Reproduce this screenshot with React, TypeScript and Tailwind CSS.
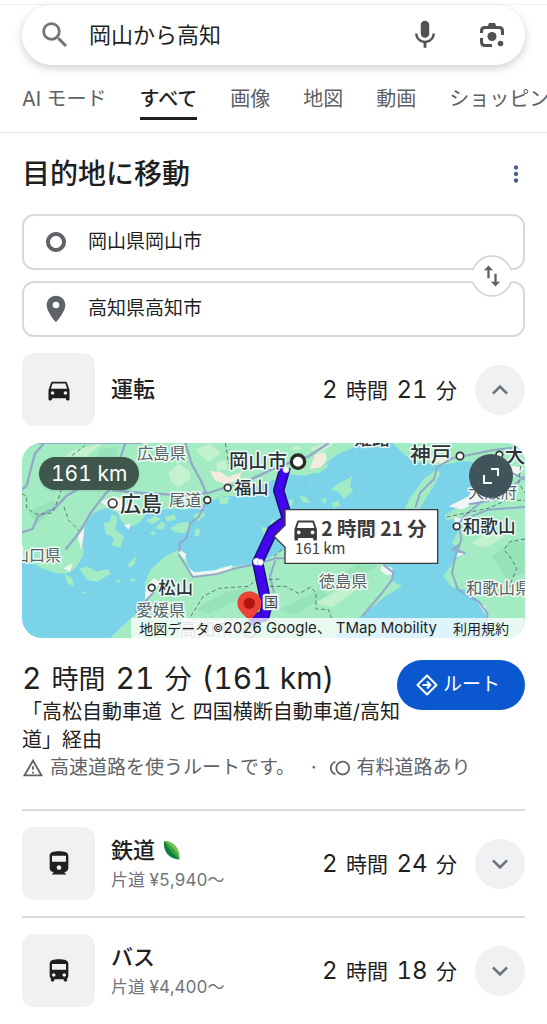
import { useState } from 'react'
import {
  MdDirectionsBus,
  MdDirectionsCar,
  MdDirectionsRailway,
  MdExpandLess,
  MdExpandMore,
  MdMic,
  MdMoreVert,
  MdOutlineToll,
  MdOutlineWarningAmber,
  MdPlace,
  MdSearch,
  MdSwapVert,
  MdTripOrigin,
} from 'react-icons/md'

const tabs = ['AI モード', 'すべて', '画像', '地図', '動画', 'ショッピング']

const LensIcon = () => (
  <svg viewBox='0 0 26 28' className='h-7 w-[26px]' fill='none' stroke='#4f5155' strokeWidth='3'>
    <path d='M2.500 12V10Q2.500 6.500 6 6.500H20Q23.500 6.500 23.500 10V14' />
    <path d='M2.500 17v4Q2.500 24.500 6 24.500H13' />
    <path d='M8.500 6L10 2h6l1.500 4z' fill='#4f5155' stroke='none' />
    <circle cx='13' cy='15.500' r='4.500' fill='#4f5155' stroke='none' />
    <circle cx='21.500' cy='22.500' r='2.800' fill='#4f5155' stroke='none' />
  </svg>
)

const RouteIcon = () => (
  <svg viewBox='0 0 24 24' className='size-6' fill='none' stroke='currentColor' strokeWidth='2' strokeLinejoin='round'>
    <path d='M12 2.500L21.500 12 12 21.500 2.500 12z' />
    <path d='M7.500 12h8M12 8.500l3.500 3.500-3.500 3.500' />
  </svg>
)

const LeafIcon = () => (
  <svg viewBox='0 0 18 20' className='h-5 w-[18px]'>
    <path d='M1 1C9 0 18 8 16.500 19.500 13 14 7 7 1 1z' fill='#72c14b' />
    <path d='M1 1C0 11 5 19 16.500 19.500 13 13 7 6 1 1z' fill='#0f7f3a' />
    <path d='M1 1C6 9 11 15 16.500 19.500 15 12 8 5 1 1z' fill='#3aa346' />
  </svg>
)

type DurationProps = { minutes: number; large?: boolean }

// kanji units are set a little smaller than the digits
function Duration({ minutes, large }: DurationProps) {
  const unit = large ? 'text-[27px] mx-0.5' : 'text-[21px] mx-0.5'
  return (
    <>
      2 <span className={unit}>時間</span> {minutes} <span className={unit}>分</span>
    </>
  )
}

type Label = { text: string; x: number; y: number; size: number; city?: boolean; faded?: boolean }

const labels: Label[] = [
  { text: '広島県', x: 345, y: 48, size: 49 },
  { text: '広島', x: 294, y: 204, size: 63, city: true },
  { text: '尾道', x: 441, y: 189, size: 49 },
  { text: '福山', x: 636, y: 152, size: 52, city: true },
  { text: '岡山市', x: 621, y: 76, size: 58, city: true },
  { text: '山口県', x: -27, y: 353, size: 48 },
  { text: '松山', x: 409, y: 453, size: 52, city: true },
  { text: '愛媛県', x: 343, y: 518, size: 49 },
  { text: '徳島県', x: 890, y: 431, size: 49 },
  { text: '神戸', x: 1164, y: 57, size: 62, city: true },
  { text: '大阪', x: 1448, y: 59, size: 62, city: true },
  { text: '大阪府', x: 1338, y: 165, size: 49 },
  { text: '和歌山', x: 1322, y: 270, size: 53, city: true },
  { text: '和歌山県', x: 1332, y: 453, size: 49 },
  { text: '姫路', x: 996, y: 5, size: 54, city: true },
  { text: '高知市', x: 472, y: 580, size: 54, faded: true },
]

const stations = [
  [272, 181, 13],
  [556, 171, 10],
  [617, 134, 10],
  [389, 434, 10],
  [1314, 39, 11],
  [1432, 35, 10],
  [1304, 250, 10],
]

const route = 'M790 72L770 142 797 230 752 262 707 358 722 430 734 490 726 520 684 532'

const RouteMap = () => (
  <svg viewBox='0 0 1509 585' preserveAspectRatio='xMidYMid slice' className='block h-[195px] w-full bg-[#7ad3e9]'>
    {/* land */}
    <g fill='#a3ebc3'>
      <path d='M0 0H1060L1010 6 980 20 950 32 912 60 890 86 850 98 815 95 800 92 770 122 755 110 720 126 680 136 640 160 600 158 570 175 530 190 490 200 450 196 400 205 370 215 352 240 322 252 300 238 285 208 250 195 215 210 190 240 183 290 184 335 165 370 140 390 105 392 60 375 0 345z' />
      <path d='M265 585L300 550 345 510 372 470 368 420 385 380 430 340 468 322 492 345 505 388 560 390 600 372 690 365 740 345 790 318 1000 340 1080 362 1115 385 1108 412 1140 430 1090 460 1020 518 970 550 935 585z' />
      <path d='M1110 0L1165 50 1250 68 1320 55 1390 60 1370 130 1350 165 1310 190 1268 218 1298 232 1306 270 1290 300 1330 332 1300 350 1265 398 1290 432 1330 440 1380 480 1392 525 1400 585H1509V0z' />
      <path d='M1148 200L1160 172 1182 140 1208 105 1244 82 1256 90 1222 150 1190 200z' />
      <path d='M925 138L958 118 990 100 984 130 994 142 966 168 950 148z' />
      <path d='M752 225L768 262 738 298 716 252 740 256z' />
      <path d='M246 240L262 236 270 212 286 222 280 262 306 280 296 314 268 306 276 286 250 272z' />
      <path d='M172 378L196 370 222 386 256 378 266 392 226 416 196 412z' />
      <path d='M128 392L150 404 156 430 138 422z' />
      <path d='M316 366l26-28-4 24-16 12zM276 415l20-8-4 12zM322 410l14-6 4 8-12 6zM178 448l14-4-2 10zM384 270l10-6 8 8-12 4z' />
      <path d='M372 232l28-14 16 10-26 16zM400 256l18-20 14 8-10 16zM428 222l30-8 4 16-26 6zM446 254l24-14 26-4 10 16-20 20-30-6zM512 218l26-14 12 12-22 20zM520 258l16-2-6 26-12-4zM592 160l30 2-6 22-24-2z' />
      <path d='M832 158l20 4 12 18-22-2zM802 168l12 2-2 20-10-4zM894 168l20-2-4 18zM928 180l22-6 4 16-20 4zM862 124l6 2-4 6zM876 84l44-24-6 16-28 16zM1268 214l40-8-10 20-26 8z' />
    </g>
    {/* shaded and lighter hills */}
    <g fill='#c4f2cf'>
      <path d='M150 24L240 0 190 44 130 74 84 130 110 60z' />
      <path d='M440 88L470 62 500 80 506 108 470 132 446 116zM520 20l44-18 34 28-40 26z' />
      <path d='M580 60l30-10 8 28-30 6zM862 16l44-16h34l-50 34zM800 20l30-14 6 14z' />
      <path d='M1350 300l40-30 60 10-60 34zM880 480l90-50 40 6-80 56z' />
    </g>
    <g fill='#96e3ba'>
      <path d='M520 500L600 452 680 432 650 470 560 512zM770 500l120-60 30 14-100 60zM950 400l60-40 60 10-70 34z' />
      <path d='M1410 340l60-50 39 10v90l-54 20zM20 210l70-40 20 20-60 50zM230 20l60-10-20 60-40 20z' />
    </g>
    {/* built-up coast */}
    <g fill='#f1f5f4'>
      <path d='M236 176l40-18 30 14 16 26-36 6-30-12zM172 262l14-4-2 26-8 34-8-30zM124 376l28-16-8 26zM306 246l20-4-6 18z' />
      <path d='M470 318l22 14-2 18-18-16zM496 372l22 16 60-6 54-16-8 16-56 18-62-2zM372 430l24-24 16 10-14 30-30 24z' />
      <path d='M1280 190l60-30 34-70 60-30 75 16-30 24-60 20-40 50-60 30zM1296 222l24 6-4 20-18-4zM1080 366l30 8 6 20-24 2-18-14z' />
      <path d='M1306 328l22 4-24 12zM1366 476l24 14-2 20z' />
    </g>
    <g fill='#f3ebdf'>
      <path d='M564 84l30 2 24 16 40-14-4 16-42 22-34-14zM880 34l30-6 4 24-20 22-32 4zM1180 40l60 10 40-6-20 18z' />
    </g>
    {/* roads */}
    <g fill='none' stroke='#92a9c8' strokeWidth='7' strokeLinejoin='round'>
      <path d='M0 268L32 258 48 220 98 196 132 160 180 130 220 104 270 90M66 0L38 34 26 80 14 128 0 140M130 320L172 268 206 210 250 152 276 130 290 60 310 0' />
      <path d='M270 142L360 150 470 156 560 150 612 132 680 112 770 70 860 40 920 0M490 0L508 60 540 120 552 150' />
      <path d='M550 180L530 222 505 240 494 284 474 300 472 326M470 334L512 402 580 394 640 376 710 362 760 346 790 346M340 510L384 460 396 446M360 0H0' strokeWidth='6' />
      <path d='M1020 520L1080 450 1110 410 1114 388 1084 366M1180 195L1194 150 1236 108 1246 72 1290 46 1420 20 1509 10M760 352L744 400 756 450' strokeWidth='6' />
      <path d='M1386 170L1326 220 1310 244 1318 290 1300 340 1290 390 1308 440 1370 476 1396 510 1394 585M1316 232L1400 200 1509 192M1340 184L1420 170 1509 100M1470 90L1509 110M1330 330L1292 320 1316 300' strokeWidth='6' />
    </g>
    {/* prefecture borders */}
    <g fill='none' stroke='#5d7a74' strokeWidth='3' strokeDasharray='12 8'>
      <path d='M0 152L14 160 14 196 44 214 90 210 100 190 116 150 122 86 142 44 188 8M126 192L140 232 172 264M610 0L620 62' />
      <path d='M506 520L544 460 590 436 680 430 700 412 780 408M744 430L790 430 832 452 866 432 882 450 882 498 920 500 928 525M756 340L780 320' />
      <path d='M1274 222L1350 206 1400 196 1452 172 1509 172M1496 70L1490 120 1509 150M1509 288L1464 296 1446 320 1470 350 1484 376 1462 430 1509 420' />
    </g>
    {/* driving route */}
    <g fill='none' strokeLinejoin='round'>
      <path d={route} stroke='#1c1079' strokeWidth='34' />
      <path d={route} stroke='#4206ee' strokeWidth='25' />
    </g>
    <g fill='#fff' stroke='#c9c4dc' strokeWidth='3'>
      <circle cx='704' cy='356' r='10' />
      <circle cx='715' cy='358' r='9' />
      <circle cx='792' cy='80' r='9' />
    </g>
    <g fontFamily='"Noto Sans CJK JP", sans-serif' strokeLinejoin='round' style={{ paintOrder: 'stroke' }}>
      {labels.map((l) => (
        <text
          key={l.text}
          x={l.x}
          y={l.y}
          fontSize={l.size}
          fontWeight={l.city ? 500 : 400}
          fill={l.faded ? '#9b8f96' : l.city ? '#2b3338' : '#566269'}
          stroke='#fff'
          strokeOpacity='0.85'
          strokeWidth='9'
        >
          {l.text}
        </text>
      ))}
    </g>
    {stations.map(([cx, cy, r]) => (
      <circle key={cx} cx={cx} cy={cy} r={r} fill='#fff' stroke='#333' strokeWidth='5' />
    ))}
    <circle cx='684' cy='566' r='18' fill='none' stroke='#9b8f96' strokeWidth='6' />
    <circle cx='828' cy='56' r='20' fill='#fff' stroke='#2b2b2b' strokeWidth='10' />
    <rect x='722' y='452' width='50' height='50' rx='8' fill='#e9f3ee' />
    <text x='726' y='493' fontSize='42' fill='#444' fontFamily='"Noto Sans CJK JP", sans-serif'>国</text>
    <path d='M682 540C676 518 646 508 646 481a36 36 0 0 1 72 0C718 508 688 518 682 540z' fill='#ea4335' />
    <circle cx='682' cy='481' r='17' fill='#b31412' />
    {/* travel time callout */}
    <path d='M789 200H1247V361H789V313L756 280 789 247z' fill='#fff' stroke='#3c3c3c' strokeWidth='4' />
    <svg x='806' y='214' width='90' height='90' viewBox='0 0 24 24' fill='#3c3c3c'>
      <path d='M18.920 6.010C18.720 5.420 18.160 5 17.500 5h-11c-.66 0-1.210.42-1.420 1.010L3 12v8c0 .55.45 1 1 1h1c.55 0 1-.45 1-1v-1h12v1c0 .55.45 1 1 1h1c.55 0 1-.45 1-1v-8l-2.080-5.990zM6.500 16c-.83 0-1.500-.67-1.500-1.500S5.670 13 6.500 13s1.500.67 1.500 1.500S7.330 16 6.500 16zm11 0c-.83 0-1.500-.67-1.500-1.500s.67-1.500 1.500-1.500 1.500.67 1.500 1.500-.67 1.500-1.500 1.500zM5 11l1.500-4.500h11L19 11H5z' />
    </svg>
    <g fill='#3c3c3c' fontFamily='"Noto Sans CJK JP", sans-serif'>
      <text x='898' y='278' fontSize='58' fontWeight='700'>2 時間 21 分</text>
      <text x='819' y='332' fontSize='45'>161 km</text>
    </g>
  </svg>
)

const transitOptions = [
  { name: '鉄道', fare: '片道 ¥5,940〜', minutes: 24, Icon: MdDirectionsRailway, eco: true },
  { name: 'バス', fare: '片道 ¥4,400〜', minutes: 18, Icon: MdDirectionsBus, eco: false },
]

export default function App() {
  const [query, setQuery] = useState('岡山から高知')
  const [origin, setOrigin] = useState('岡山県岡山市')
  const [destination, setDestination] = useState('高知県高知市')

  const handleSwap = () => {
    setOrigin(destination)
    setDestination(origin)
  }

  return (
    <div className='min-h-screen overflow-x-hidden bg-white font-[Inter,"Noto_Sans_CJK_JP",sans-serif] text-[#1f1f1f] tabular-nums'>
      <header className='border-b border-[#e3e3e3]'>
        <div className='mt-1 border-t border-[#f3f3f3] px-[22px]'>
          <form
            onSubmit={(e) => e.preventDefault()}
            className='flex h-[60px] items-center rounded-full bg-white pr-5 pl-4 shadow-[0_3px_8px_rgba(60,64,67,0.25)]'
          >
            <MdSearch className='size-[34px] shrink-0 text-[#70757a]' />
            <input
              type='search'
              aria-label='検索'
              value={query}
              onChange={(e) => setQuery(e.target.value)}
              className='ml-[17px] min-w-0 flex-1 bg-transparent text-[22px] outline-none'
            />
            <button type='button' aria-label='音声検索' className='mr-[37px] text-[#4f5155]'>
              <MdMic className='size-[34px]' />
            </button>
            <button type='button' aria-label='画像で検索'>
              <LensIcon />
            </button>
          </form>
        </div>
        <nav className='mt-[17px] flex gap-[33px] pl-[22px] text-xl leading-[34px] whitespace-nowrap text-[#5e6063]'>
          {tabs.map((tab) => (
            <a
              key={tab}
              href='#'
              className={tab === 'すべて' ? 'h-[38px] border-b-3 border-[#1f1f1f] font-medium text-[#1f1f1f]' : 'h-[38px]'}
            >
              {tab}
            </a>
          ))}
        </nav>
        <div className='h-3' />
      </header>

      <main className='px-[22px]'>
        <div className='flex h-[81px] items-center justify-between'>
          <h1 className='text-[28px] font-medium'>目的地に移動</h1>
          <button type='button' aria-label='その他' className='-mr-1 text-[#4a5a8c]'>
            <MdMoreVert className='size-[26px]' />
          </button>
        </div>

        <div className='relative flex flex-col gap-[11px]'>
          <label className='flex h-14 items-center rounded-xl border-2 border-[#d9d9d9] px-5'>
            <MdTripOrigin className='size-6 shrink-0 text-[#5f6368]' />
            <input
              aria-label='出発地'
              value={origin}
              onChange={(e) => setOrigin(e.target.value)}
              className='ml-5 min-w-0 flex-1 text-[19px] outline-none'
            />
          </label>
          <label className='flex h-14 items-center rounded-xl border-2 border-[#d9d9d9] px-5'>
            <span className='flex w-6 shrink-0 justify-center text-[#5f6368]'>
              <MdPlace className='size-8 shrink-0' />
            </span>
            <input
              aria-label='目的地'
              value={destination}
              onChange={(e) => setDestination(e.target.value)}
              className='ml-5 min-w-0 flex-1 text-[19px] outline-none'
            />
          </label>
          <button
            type='button'
            aria-label='出発地と目的地を入れ替える'
            onClick={handleSwap}
            className='absolute top-1/2 right-3 flex size-[42px] -translate-y-1/2 items-center justify-center rounded-full border-2 border-[#d9d9d9] bg-white'
          >
            <span className='absolute -inset-x-0.5 top-1/2 h-[11px] -translate-y-1/2 bg-white' />
            <MdSwapVert className='relative size-7 text-[#5f6368]' />
          </button>
        </div>

        <section className='mt-4 flex items-center'>
          <span className='flex size-[73px] shrink-0 items-center justify-center rounded-xl bg-[#f0f1f3]'>
            <MdDirectionsCar className='size-7' />
          </span>
          <h2 className='ml-4 flex-1 text-[22px] font-medium'>運転</h2>
          <p className='mr-4 text-2xl'>
            <Duration minutes={21} />
          </p>
          <button type='button' aria-label='閉じる' className='flex size-[50px] items-center justify-center rounded-full bg-[#f0f1f3] text-[#70757a]'>
            <MdExpandLess className='size-8' />
          </button>
        </section>

        <div className='relative mt-[17px] overflow-hidden rounded-[20px]'>
          <RouteMap />
          <span className='absolute top-[14px] left-[17px] rounded-full bg-[#3e564b] px-3 text-[21px] leading-[33px] text-white shadow'>
            161 km
          </span>
          <button
            type='button'
            aria-label='地図を拡大'
            className='absolute top-[11px] right-3 flex size-11 items-center justify-center rounded-full bg-[#40545b] text-white'
          >
            <svg viewBox='0 0 18 18' className='size-[18px]' fill='none' stroke='currentColor' strokeWidth='2'>
              <path d='M9 2h7v7M2 8v8h8' />
            </svg>
          </button>
          <p className='absolute right-0 bottom-0 flex h-5 items-center bg-white/75 pr-4 pl-2 text-[14px] whitespace-nowrap'>
            地図データ&nbsp;<span className='text-[11px]'>©</span>
            <span className='text-[15px]'>2026 Google、 TMap Mobility</span>
            <a href='#' className='ml-4'>利用規約</a>
          </p>
        </div>

        <section className='pt-[22px] pb-[27px]'>
          <div className='flex items-start'>
            <div className='-mr-1 min-w-0 flex-1'>
              <h2 className='text-3xl leading-9 whitespace-nowrap'>
                <Duration minutes={21} large /> (161 km)
              </h2>
              <p className='text-xl leading-7'>「高松自動車道 と 四国横断自動車道/高知道」経由</p>
            </div>
            <a
              href='#'
              className='relative flex h-[50px] w-32 shrink-0 items-center gap-1 rounded-full bg-[#0b57d0] pl-[18px] text-[19px] text-white'
            >
              <RouteIcon />
              ルート
            </a>
          </div>
          <p className='flex items-center text-[19px] leading-7 whitespace-nowrap text-[#5f6368]'>
            <MdOutlineWarningAmber className='mr-1.5 size-[22px]' />
            高速道路を使うルートです。
            <span className='mr-2 ml-4'>·</span>
            <MdOutlineToll className='mr-1.5 ml-1 size-[22px]' />
            有料道路あり
          </p>
        </section>

        {transitOptions.map(({ name, fare, minutes, Icon, eco }) => (
          <section key={name} className='flex items-center border-t-2 border-[#dadada] py-4'>
            <span className='flex size-[73px] shrink-0 items-center justify-center rounded-xl bg-[#f0f1f3]'>
              <Icon className='size-7' />
            </span>
            <div className='ml-4 flex-1'>
              <h2 className='flex items-center gap-2 text-[22px] leading-8 font-medium'>
                {name}
                {eco && <LeafIcon />}
              </h2>
              <p className='text-[17px] leading-7 text-[#70757a]'>{fare}</p>
            </div>
            <p className='mr-4 text-2xl'>
              <Duration minutes={minutes} />
            </p>
            <button type='button' aria-label={`${name}の詳細`} className='flex size-[50px] items-center justify-center rounded-full bg-[#f0f1f3] text-[#70757a]'>
              <MdExpandMore className='size-8' />
            </button>
          </section>
        ))}
      </main>
    </div>
  )
}
